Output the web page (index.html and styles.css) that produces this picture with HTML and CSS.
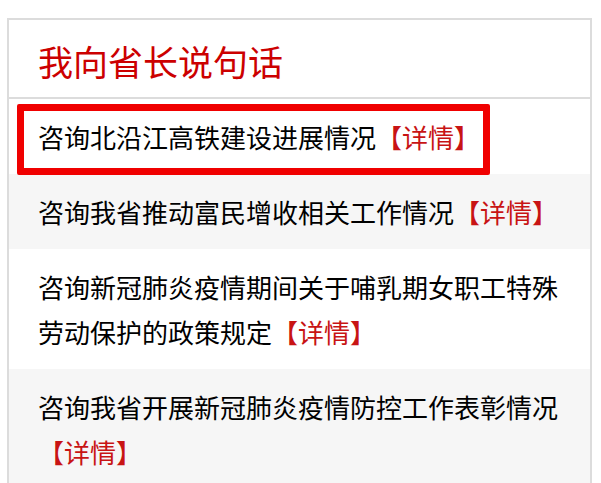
FILE: index.html
```html
<!DOCTYPE html>
<html lang="zh-CN">
<head>
<meta charset="utf-8">
<title>我向省长说句话</title>
<link rel="stylesheet" href="styles.css">
</head>
<body>
<div class="panel">
  <div class="panel-head">
    <h2 class="panel-title">我向省长说句话</h2>
  </div>
  <ul class="qa-list">
    <li class="qa-item qa-item--marked">
      咨询北沿江高铁建设进展情况<a class="more" href="#">【详情】</a>
      <span class="mark"></span>
    </li>
    <li class="qa-item qa-item--alt">
      咨询我省推动富民增收相关工作情况<a class="more" href="#">【详情】</a>
    </li>
    <li class="qa-item">
      咨询新冠肺炎疫情期间关于哺乳期女职工特殊劳动保护的政策规定<a class="more" href="#">【详情】</a>
    </li>
    <li class="qa-item qa-item--alt">
      咨询我省开展新冠肺炎疫情防控工作表彰情况<a class="more" href="#">【详情】</a>
    </li>
  </ul>
</div>
</body>
</html>
```

FILE: styles.css
```css
html, body {
  margin: 0;
  padding: 0;
  background: #fff;
}
body {
  padding: 18px 9px 0 7px;
  font-family: "Noto Sans CJK SC", "Noto Sans", sans-serif;
  overflow: hidden;
  height: 483px;
  box-sizing: border-box;
}
.panel {
  border: 2px solid #dcdcdc;
  border-bottom: none;
  height: 465px;
  box-sizing: border-box;
  overflow: hidden;
}
.panel-head {
  height: 77px;
  border-bottom: 2px solid #dcdcdc;
  display: flex;
  align-items: center;
  padding-left: 29px;
}
.panel-title {
  margin: 0;
  font-size: 35px;
  font-weight: normal;
  color: #cc0000;
  line-height: 40px;
  position: relative;
  top: 2px;
}
.qa-list {
  list-style: none;
  margin: 0;
  padding: 0;
}
.qa-item {
  padding: 15px 20px 15px 29px;
  font-size: 26px;
  line-height: 45px;
  color: #000;
  background: #fff;
}
.qa-item--alt {
  background: #f6f6f6;
}
.qa-item--marked {
  position: relative;
}
.more {
  color: #c81414;
  text-decoration: none;
}
.mark {
  position: absolute;
  left: 8px;
  top: 5px;
  width: 473px;
  height: 71px;
  box-sizing: border-box;
  border: 7px solid #f00000;
  border-radius: 2px;
}
```
